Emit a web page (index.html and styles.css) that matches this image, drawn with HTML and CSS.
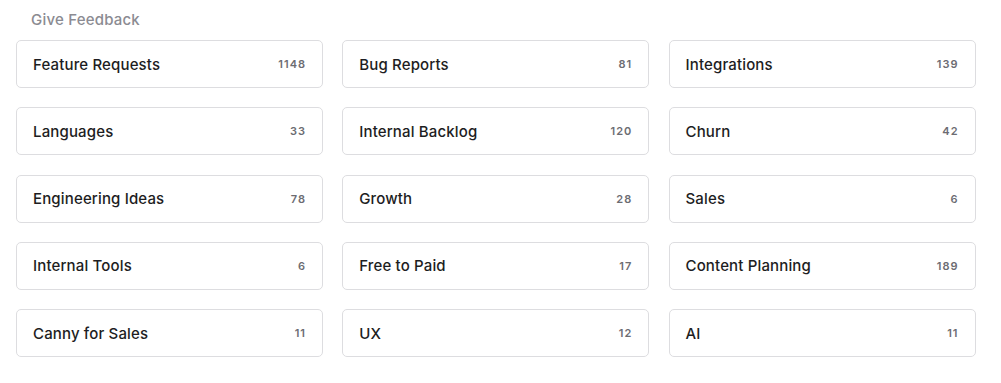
FILE: index.html
```html
<!DOCTYPE html>
<html>
<head>
<meta charset="utf-8">
<link rel="stylesheet" href="styles.css">
</head>
<body>
<section class="panel">
  <h2 class="title">Give Feedback</h2>
  <div class="grid">
    <a class="card"><span class="name">Feature Requests</span><span class="count">1148</span></a>
    <a class="card"><span class="name">Bug Reports</span><span class="count">81</span></a>
    <a class="card"><span class="name">Integrations</span><span class="count">139</span></a>
    <a class="card"><span class="name">Languages</span><span class="count">33</span></a>
    <a class="card"><span class="name">Internal Backlog</span><span class="count">120</span></a>
    <a class="card"><span class="name">Churn</span><span class="count">42</span></a>
    <a class="card"><span class="name">Engineering Ideas</span><span class="count">78</span></a>
    <a class="card"><span class="name">Growth</span><span class="count">28</span></a>
    <a class="card"><span class="name">Sales</span><span class="count">6</span></a>
    <a class="card"><span class="name">Internal Tools</span><span class="count">6</span></a>
    <a class="card"><span class="name">Free to Paid</span><span class="count">17</span></a>
    <a class="card"><span class="name">Content Planning</span><span class="count">189</span></a>
    <a class="card"><span class="name">Canny for Sales</span><span class="count">11</span></a>
    <a class="card"><span class="name">UX</span><span class="count">12</span></a>
    <a class="card"><span class="name">AI</span><span class="count">11</span></a>
  </div>
</section>
</body>
</html>
```
FILE: styles.css
```css
html, body {
  margin: 0;
  padding: 0;
  background: #ffffff;
}
body {
  font-family: Inter, "Noto Sans", sans-serif;
  -webkit-font-smoothing: antialiased;
}
.panel {
  padding: 10px 25px 0 16px;
}
.title {
  margin: 0 0 11px 15px;
  font-size: 15px;
  line-height: 19px;
  font-weight: 500;
  color: #8b8b92;
  letter-spacing: 0.2px;
}
.grid {
  display: grid;
  grid-template-columns: repeat(3, 307px);
  column-gap: 19.25px;
  row-gap: 19.25px;
}
.card {
  box-sizing: border-box;
  height: 48px;
  display: flex;
  align-items: center;
  justify-content: space-between;
  padding: 0 16px 0 16px;
  border: 1px solid #dddde0;
  border-radius: 5px;
  background: #fff;
}
.name {
  font-size: 15px;
  font-weight: 500;
  color: #1d1d22;
  letter-spacing: 0.15px;
}
.count {
  font-size: 11px;
  font-weight: 600;
  color: #6c6c72;
  letter-spacing: 1px;
}
```
